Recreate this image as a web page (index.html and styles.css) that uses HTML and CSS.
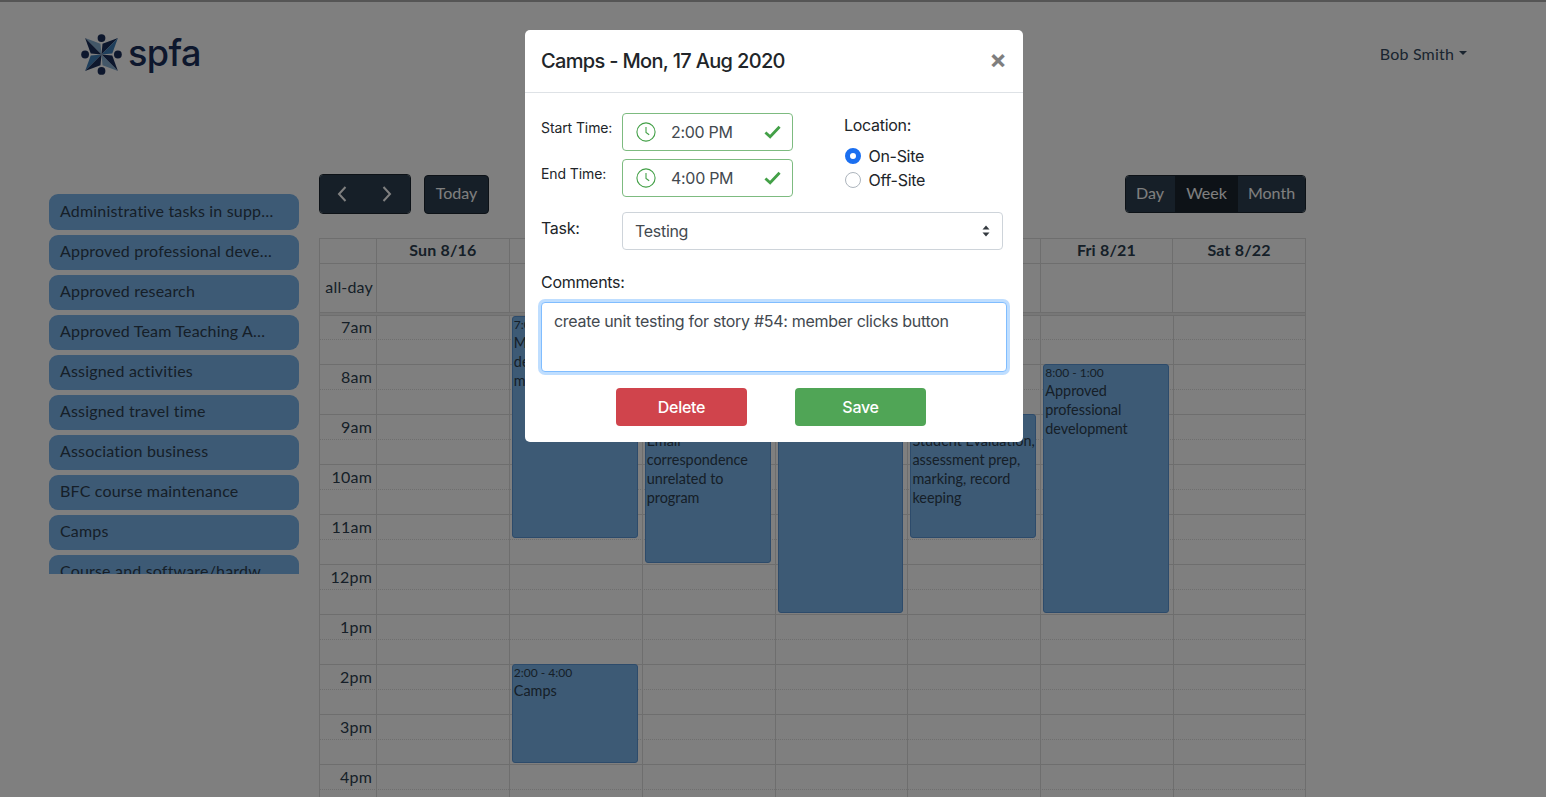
FILE: index.html
```html
<!DOCTYPE html>
<html lang="en">
<head>
<meta charset="utf-8">
<title>SPFA Calendar</title>
<link rel="stylesheet" href="styles.css">
</head>
<body>
<div class="topline"></div>
<header class="site-header">
  <a class="brand">
    <svg class="brand-mark" viewBox="0 0 40 40" aria-hidden="true">
      <circle class="ink" cx="20" cy="4" r="3.8"/><circle class="ink" cx="20" cy="36" r="3.8"/>
      <circle class="ink" cx="4" cy="20" r="3.8"/><circle class="ink" cx="36" cy="20" r="3.8"/>
      <polygon class="pale" points="4,4 19,9.5 20,20"/><polygon class="ink" points="4,4 9.5,19 20,20"/>
      <polygon class="ink" points="36,4 21,9.5 20,20"/><polygon class="mid" points="36,4 30.5,19 20,20"/>
      <polygon class="ink" points="36,36 30.5,21 20,20"/><polygon class="pale" points="36,36 21,30.5 20,20"/>
      <polygon class="mid" points="4,36 9.5,21 20,20"/><polygon class="ink" points="4,36 19,30.5 20,20"/>
    </svg>
    <span class="brand-name">spfa</span>
  </a>
  <a class="user-menu">Bob Smith<span class="caret"></span></a>
</header>

<main class="layout">
  <aside class="task-list">
    <div class="task">Administrative tasks in supp…</div>
    <div class="task">Approved professional deve…</div>
    <div class="task">Approved research</div>
    <div class="task">Approved Team Teaching A…</div>
    <div class="task">Assigned activities</div>
    <div class="task">Assigned travel time</div>
    <div class="task">Association business</div>
    <div class="task">BFC course maintenance</div>
    <div class="task">Camps</div>
    <div class="task">Course and software/hardw…</div>
  </aside>

  <section class="calendar">
    <div class="toolbar">
      <div class="toolbar-left">
        <div class="btn-group nav-group">
          <button class="btn nav-btn" aria-label="Previous">
            <svg viewBox="0 0 12 20"><path d="M9.5 3 3 10l6.5 7"/></svg>
          </button>
          <button class="btn nav-btn" aria-label="Next">
            <svg viewBox="0 0 12 20"><path d="M2.5 3 9 10l-6.5 7"/></svg>
          </button>
        </div>
        <button class="btn today">Today</button>
      </div>
      <div class="btn-group view-group">
        <button class="btn view-day">Day</button>
        <button class="btn view-week">Week</button>
        <button class="btn view-month">Month</button>
      </div>
    </div>

    <div class="grid">
      <div class="cols head-row">
        <div class="cell"></div>
        <div class="cell">Sun 8/16</div><div class="cell">Mon 8/17</div><div class="cell">Tue 8/18</div>
        <div class="cell">Wed 8/19</div><div class="cell">Thu 8/20</div><div class="cell">Fri 8/21</div><div class="cell">Sat 8/22</div>
      </div>
      <div class="cols allday-row">
        <div class="cell axis-label">all-day</div>
        <div class="cell"></div><div class="cell"></div><div class="cell"></div>
        <div class="cell"></div><div class="cell"></div><div class="cell"></div><div class="cell"></div>
      </div>
      <div class="divider"></div>
      <div class="timegrid">
        <div class="hour first">7am</div>
        <div class="hour">8am</div>
        <div class="hour">9am</div>
        <div class="hour">10am</div>
        <div class="hour">11am</div>
        <div class="hour">12pm</div>
        <div class="hour">1pm</div>
        <div class="hour">2pm</div>
        <div class="hour">3pm</div>
        <div class="hour">4pm</div>
        <div class="cols day-columns">
          <div class="day"></div>
          <div class="day"></div>
          <div class="day">
            <div class="event" style="top:0;height:222px"><small>7:00 - 11:30</small>Mandatory department meetings</div>
            <div class="event" style="top:348px;height:99px"><small>2:00 - 4:00</small>Camps</div>
          </div>
          <div class="day">
            <div class="event" style="top:98px;height:149px"><small>9:00 - 12:00</small>Email correspondence unrelated to program</div>
          </div>
          <div class="day">
            <div class="event" style="top:48px;height:249px"><small>8:00 - 1:00</small>Teaching</div>
          </div>
          <div class="day">
            <div class="event" style="top:98px;height:124px"><small>9:00 - 11:30</small>Student Evaluation, assessment prep, marking, record keeping</div>
          </div>
          <div class="day">
            <div class="event" style="top:48px;height:249px"><small>8:00 - 1:00</small>Approved professional development</div>
          </div>
          <div class="day"></div>
        </div>
      </div>
    </div>
  </section>
</main>

<div class="backdrop">
  <div class="modal">
    <div class="modal-header">
      <h2 class="modal-title">Camps - Mon, 17 Aug 2020</h2>
      <button class="close" aria-label="Close">&times;</button>
    </div>
    <form class="modal-body">
      <div class="time-row">
        <div class="times">
          <label class="time-label">Start Time:</label>
          <div class="time-field">
            <svg class="clock" viewBox="0 0 22 22"><circle cx="11" cy="11" r="10"/><path d="M11 5.5V11.5l3.5 2.5"/></svg>
            <span class="time-value">2:00 PM</span>
            <svg class="check" viewBox="0 0 18 14"><path d="M1.5 7.5 6.5 12 16.5 1.5"/></svg>
          </div>
          <label class="time-label">End Time:</label>
          <div class="time-field">
            <svg class="clock" viewBox="0 0 22 22"><circle cx="11" cy="11" r="10"/><path d="M11 5.5V11.5l3.5 2.5"/></svg>
            <span class="time-value">4:00 PM</span>
            <svg class="check" viewBox="0 0 18 14"><path d="M1.5 7.5 6.5 12 16.5 1.5"/></svg>
          </div>
        </div>
        <fieldset class="location">
          <legend class="location-title">Location:</legend>
          <label class="radio"><input type="radio" name="loc" checked>On-Site</label>
          <label class="radio"><input type="radio" name="loc">Off-Site</label>
        </fieldset>
      </div>
      <div class="task-row">
        <label class="task-label">Task:</label>
        <div class="select-wrap">
          <select class="task-select"><option>Testing</option></select>
          <svg class="select-arrows" viewBox="0 0 8 12"><path d="M4 0.5 7.5 4.5H0.5ZM4 11.5 0.5 7.5H7.5Z"/></svg>
        </div>
      </div>
      <label class="comments-label">Comments:</label>
      <textarea class="comments">create unit testing for story #54: member clicks button</textarea>
      <div class="actions">
        <button type="button" class="action delete">Delete</button>
        <button type="button" class="action save">Save</button>
      </div>
    </form>
  </div>
</div>
</body>
</html>
```
FILE: styles.css
```css
* { box-sizing: border-box; }
html, body { height: 100%; overflow: hidden; }
body {
  margin: 0;
  background: #fff;
  color: #2c3e50;
  font-family: Lato, "Open Sans", sans-serif;
  font-size: 16px;
  letter-spacing: .18px;
}
.topline { height: 2px; background: #aaa; }

.site-header {
  height: 172px;
  display: flex;
  justify-content: space-between;
  align-items: flex-start;
  padding: 32px 79px 0 81px;
}
.brand { display: flex; align-items: center; gap: 6px; height: 40px; }
.brand-mark { width: 41px; height: 41px; }
.ink { fill: #1a2f5a; }
.mid { fill: #3f7fb8; }
.pale { fill: #86aed0; }
.brand-name {
  font-family: Inter, sans-serif;
  font-size: 36px;
  font-weight: 500;
  line-height: 38px;
  margin-bottom: 2px;
  color: #1a2f5a;
  letter-spacing: -0.6px;
}
.user-menu { display: flex; align-items: center; margin-top: 10px; color: #34495e; }
.caret {
  margin-left: 5px;
  margin-bottom: 2px;
  border-top: 4.5px solid #34495e;
  border-left: 4.5px solid transparent;
  border-right: 4.5px solid transparent;
}

.layout { display: flex; align-items: flex-start; padding-left: 49px; }
.task-list {
  width: 250px;
  height: 380px;
  margin-top: 20px;
  margin-right: 20px;
  overflow: hidden;
  display: flex;
  flex-direction: column;
  gap: 5px;
}
.task {
  flex: none;
  height: 35px;
  line-height: 32px;
  padding: 0 11px;
  background: #7ab4ea;
  border-radius: 9px;
  white-space: nowrap;
  overflow: hidden;
}
.task:first-child { height: 36px; line-height: 34px; }

.calendar { width: 987px; }
.toolbar {
  display: flex;
  justify-content: space-between;
  align-items: flex-start;
  height: 64px;
}
.toolbar-left { display: flex; align-items: center; gap: 13px; }
.btn {
  background: #2c3e50;
  color: #fff;
  border: 0;
  font: inherit;
  padding: 0 0 4px;
  height: 100%;
}
.btn-group {
  display: flex;
  border: 1px solid #1a252f;
  border-radius: 4px;
  overflow: hidden;
}
.nav-group { width: 92px; height: 40px; }
.nav-btn { flex: 1; display: flex; align-items: center; justify-content: center; padding: 0 1px 0 0; }
.nav-btn svg { width: 12px; height: 20px; fill: none; stroke: #fff; stroke-width: 2; }
.today { height: 39px; width: 65px; border: 1px solid #1a252f; border-radius: 4px; }
.view-group { width: 181px; height: 38px; margin-top: 1px; }
.view-day { width: 49px; padding-right: 1px; }
.view-week { width: 63px; background: #1a252f; }
.view-month { flex: 1; }

.cols { display: grid; grid-template-columns: 57px repeat(7, 1fr); }
.head-row {
  height: 26px;
  border-top: 1px solid #ddd;
  border-bottom: 1px solid #ddd;
  border-right: 1px solid #ddd;
  font-weight: 700;
  text-align: center;
  line-height: 22px;
}
.allday-row {
  height: 49px;
  border-bottom: 1px solid #ddd;
  border-right: 1px solid #ddd;
}
.cell { border-left: 1px solid #ddd; }
.axis-label { line-height: 46px; text-align: right; padding-right: 3px; }
.divider { height: 3px; background: #eee; border: 1px solid #ddd; border-top: 0; }

.timegrid { position: relative; }
.hour {
  position: relative;
  height: 50px;
  padding-right: calc(100% - 54px);
  border: 1px solid #ddd;
  border-width: 1px 1px 0;
  text-align: right;
  line-height: 24px;
}
.hour::after {
  content: "";
  position: absolute;
  left: 0;
  right: 0;
  bottom: 24px;
  border-top: 1px dotted #ddd;
}
.hour.first { height: 48px; border-top: 0; line-height: 22px; }
.day-columns {
  position: absolute;
  inset: 0;
  overflow: hidden;
  pointer-events: none;
}
.day { position: relative; border-left: 1px solid #ddd; }
.day:first-child { border-left: 0; }
.event {
  position: absolute;
  left: 2px;
  right: 4px;
  padding: 0 0 0 1px;
  background: #7ab4ea;
  border: 1px solid #5a96d6;
  border-radius: 3px;
  font-size: 14.4px;
  letter-spacing: 0;
  line-height: 19px;
  overflow: hidden;
}
.event small { display: block; font-size: 12px; line-height: 16px; }

.backdrop {
  position: fixed;
  inset: 0;
  background: rgba(0, 0, 0, .5);
  display: flex;
  justify-content: center;
  align-items: flex-start;
  padding: 30px 0 0 2px;
}
.modal {
  width: 498px;
  height: 412px;
  background: #fff;
  border-radius: 5px;
  color: #212529;
  font-family: Inter, "Noto Sans", sans-serif;
  letter-spacing: -.3px;
}
.modal-header {
  height: 63px;
  display: flex;
  align-items: center;
  justify-content: space-between;
  padding: 0 16px;
  border-bottom: 1px solid #dee2e6;
}
.modal-title { margin: 0; font-size: 20px; font-weight: 500; letter-spacing: -.67px; }
.close {
  background: none;
  border: 0;
  padding: 0 0 2px;
  font: 700 26px/1 Inter, sans-serif;
  color: #000;
  opacity: .5;
}
.modal-body { padding: 20px 16px 16px; }
.time-row { display: flex; height: 84px; }
.times {
  display: grid;
  grid-template-columns: 81px 171px;
  grid-auto-rows: 38px;
  row-gap: 8px;
}
.time-label { font-size: 14px; line-height: 29px; letter-spacing: -.1px; }
.time-field {
  display: flex;
  align-items: center;
  padding: 0 11px 0 13px;
  border: 1px solid #7dbb80;
  border-radius: 4px;
  color: #43494f;
}
.clock { width: 20px; height: 20px; fill: none; stroke: #43a047; stroke-width: 1.2; }
.time-value { margin-left: 15px; flex: 1; }
.check { width: 17px; height: 14px; fill: none; stroke: #43a047; stroke-width: 3; }
.location { border: 0; margin: 0 0 0 51px; padding: 0; }
.location-title { padding: 0; line-height: 24px; height: 31px; }
.radio { display: flex; align-items: center; height: 24px; }
.radio input {
  appearance: none;
  width: 16px;
  height: 16px;
  margin: 0 7.5px 0 1px;
  border: 1px solid #adb5bd;
  border-radius: 50%;
  background: #fff;
}
.radio input:checked { border: 5px solid #1b6ff0; }
.task-row { display: flex; margin-top: 15px; }
.task-label { width: 81px; line-height: 32px; }
.select-wrap { position: relative; width: 381px; height: 38px; }
.task-select {
  appearance: none;
  width: 100%;
  height: 100%;
  padding: 0 12px;
  border: 1px solid #ced4da;
  border-radius: 4px;
  background: #fff;
  color: #43494f;
  font: inherit;
  letter-spacing: inherit;
}
.select-arrows { position: absolute; right: 13px; top: 13px; width: 8px; height: 12px; fill: #343a40; }
.comments-label { display: block; margin-top: 20px; line-height: 24px; }
.comments {
  display: block;
  width: 466px;
  height: 70px;
  margin-top: 8px;
  padding: 6px 12px;
  border: 1px solid #80bdff;
  border-radius: 4px;
  box-shadow: 0 0 0 3px rgba(0, 123, 255, .25);
  outline: 0;
  resize: none;
  color: #43494f;
  font: 16px/24px Inter, sans-serif;
  letter-spacing: -.3px;
}
.actions { display: flex; justify-content: center; gap: 48px; margin-top: 16px; padding-right: 6px; }
.action {
  width: 131px;
  height: 38px;
  border: 0;
  border-radius: 4px;
  color: #fff;
  font: 500 16px Inter, sans-serif;
  letter-spacing: -.3px;
}
.delete { background: #d0444c; }
.save { background: #50a556; }
```
